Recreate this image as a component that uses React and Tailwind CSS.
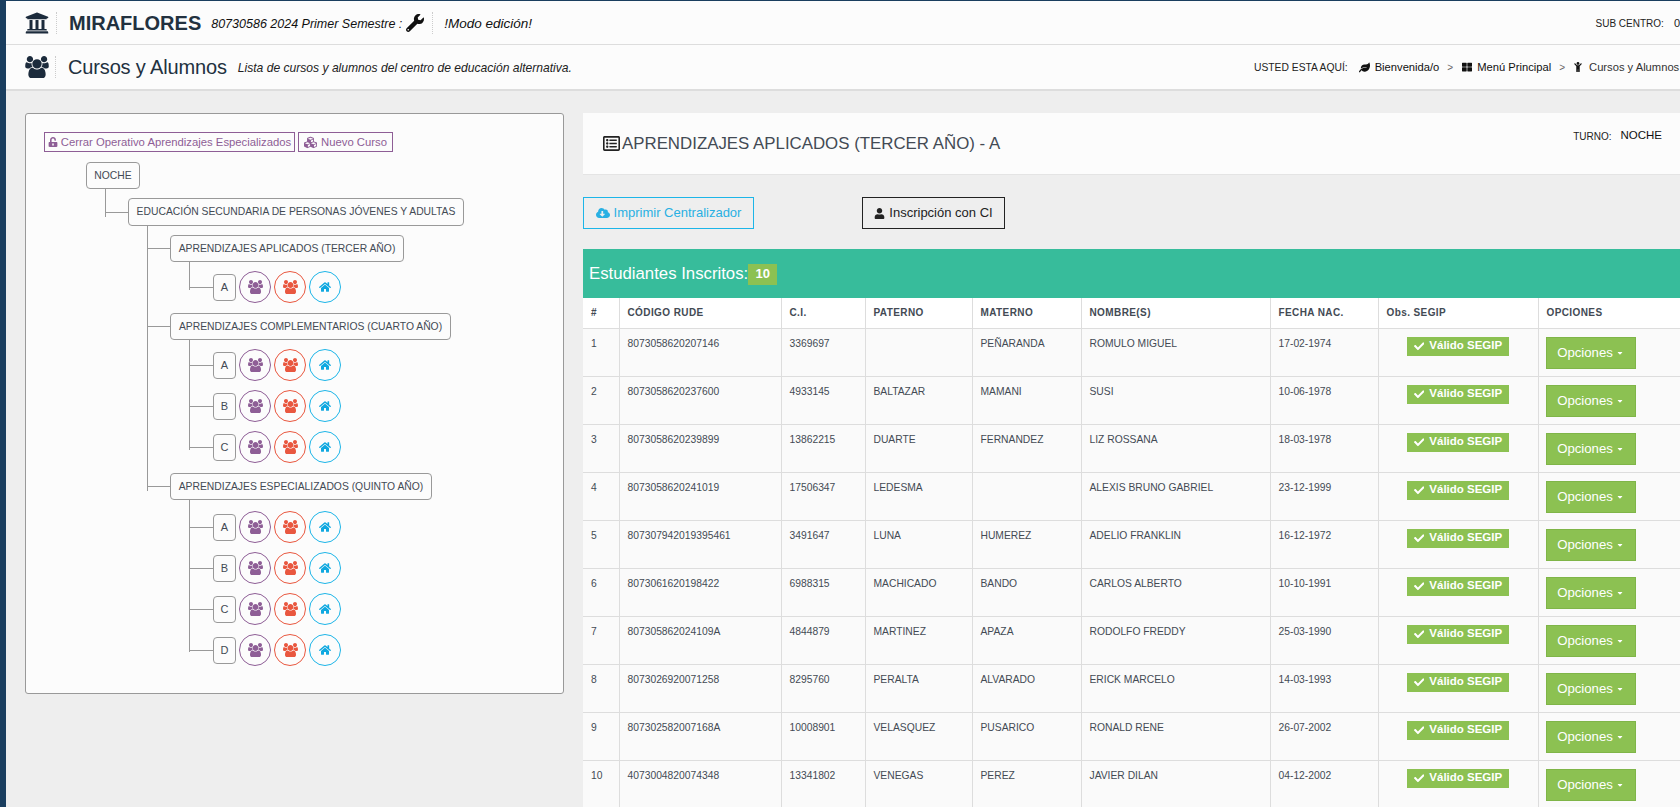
import { FaUniversity, FaWrench, FaUnlockAlt, FaCubes, FaHome, FaCloudDownloadAlt, FaUser, FaCheck, FaLeaf, FaThLarge, FaChild, FaRegListAlt, FaCaretDown } from 'react-icons/fa'

const students = [
  ['1', '8073058620207146', '3369697', '', 'PEÑARANDA', 'ROMULO MIGUEL', '17-02-1974'],
  ['2', '8073058620237600', '4933145', 'BALTAZAR', 'MAMANI', 'SUSI', '10-06-1978'],
  ['3', '8073058620239899', '13862215', 'DUARTE', 'FERNANDEZ', 'LIZ ROSSANA', '18-03-1978'],
  ['4', '8073058620241019', '17506347', 'LEDESMA', '', 'ALEXIS BRUNO GABRIEL', '23-12-1999'],
  ['5', '807307942019395461', '3491647', 'LUNA', 'HUMEREZ', 'ADELIO FRANKLIN', '16-12-1972'],
  ['6', '8073061620198422', '6988315', 'MACHICADO', 'BANDO', 'CARLOS ALBERTO', '10-10-1991'],
  ['7', '807305862024109A', '4844879', 'MARTINEZ', 'APAZA', 'RODOLFO FREDDY', '25-03-1990'],
  ['8', '8073026920071258', '8295760', 'PERALTA', 'ALVARADO', 'ERICK MARCELO', '14-03-1993'],
  ['9', '807302582007168A', '10008901', 'VELASQUEZ', 'PUSARICO', 'RONALD RENE', '26-07-2002'],
  ['10', '4073004820074348', '13341802', 'VENEGAS', 'PEREZ', 'JAVIER DILAN', '04-12-2002'],
]

const headers = ['#', 'CÓDIGO RUDE', 'C.I.', 'PATERNO', 'MATERNO', 'NOMBRE(S)', 'FECHA NAC.', 'Obs. SEGIP', 'OPCIONES']

// three person group icon, taller than the one in the icon package
function UsersIcon({ className = '' }) {
  return (
    <svg viewBox="0 0 1920 1792" fill="currentColor" className={className}>
      <path d="M593 896q-162 5-265 128h-134q-82 0-138-40.500t-56-118.500q0-353 124-353 6 0 43.500 21t97.500 42.500 119 21.500q67 0 133-23-5 37-5 66 0 139 81 256zm1071 637q0 120-73 189.500t-194 69.500h-874q-121 0-194-69.500t-73-189.500q0-53 3.500-103.500t14-109 26.500-108.500 43-97.500 62-81 85.500-53.500 111.500-20q10 0 43 21.500t73 48 107 48 135 21.500 135-21.500 107-48 73-48 43-21.500q61 0 111.500 20t85.500 53.500 62 81 43 97.500 26.500 108.500 14 109 3.500 103.500zm-1024-1277q0 106-75 181t-181 75-181-75-75-181 75-181 181-75 181 75 75 181zm704 384q0 159-112.500 271.500t-271.500 112.500-271.500-112.500-112.500-271.500 112.500-271.500 271.500-112.500 271.500 112.500 112.500 271.500zm576 225q0 78-56 118.500t-138 40.500h-134q-103-123-265-128 81-117 81-256 0-29-5-66 66 23 133 23 59 0 119-21.500t97.500-42.500 43.500-21q124 0 124 353zm-128-609q0 106-75 181t-181 75-181-75-75-181 75-181 181-75 181 75 75 181z" />
    </svg>
  )
}

function TreeBox({ children, className = '' }) {
  return (
    <div className={'flex items-center justify-center border border-[#999] rounded-[4px] bg-[#fcfcfc] text-[10.35px] text-[#434a54] ' + className}>
      {children}
    </div>
  )
}

function Parallel({ label, className = '' }) {
  return (
    <div className={'flex items-center h-[32px] ' + className}>
      <div className="w-[24px] h-px bg-[#999]" />
      <TreeBox className="w-[23px] h-[27px] text-[11px]">{label}</TreeBox>
      <div className="flex gap-[3px] ml-[3px]">
        <div className="w-[32px] h-[32px] rounded-full border border-[#8e5e96] flex items-center justify-center text-[#8e5e96]"><UsersIcon className="w-[15px] h-[14px]" /></div>
        <div className="w-[32px] h-[32px] rounded-full border border-[#e9573f] flex items-center justify-center text-[#e9573f]"><UsersIcon className="w-[15px] h-[14px]" /></div>
        <div className="w-[32px] h-[32px] rounded-full border border-[#1cb5e8] flex items-center justify-center text-[#0fa8e0] text-[12px]"><FaHome /></div>
      </div>
    </div>
  )
}

function Grade({ title, width, parallels, lineHeight, pt = 'pt-[9px]', className = '' }) {
  return (
    <div className={className}>
      <div className="flex items-center">
        <div className="w-[23px] h-px bg-[#999]" />
        <TreeBox className={'h-[27px] ' + width}>{title}</TreeBox>
      </div>
      <div className={'relative ml-[42px] ' + pt}>
        <div className="absolute left-0 -top-px w-px bg-[#999]" style={{ height: lineHeight }} />
        {parallels.map((p, i) => (
          <Parallel key={p} label={p} className={i > 0 ? 'mt-[9px]' : ''} />
        ))}
      </div>
    </div>
  )
}

export default function App() {
  return (
    <div className="w-[1680px] h-[807px] overflow-hidden flex bg-[#eeeeee] font-['Liberation_Sans',Arial,sans-serif] text-[#111]">
      <div className="w-[6px] bg-[#1a3e5f] shrink-0" />
      <div className="flex-1 min-w-0 flex flex-col">
        {/* Top bar */}
        <div className="h-[45px] pt-px bg-[#fcfcfc] border-t border-t-[#1a3e5f] border-b border-b-[#dddddd] flex items-center justify-between whitespace-nowrap">
          <div className="flex items-center">
            <FaUniversity className="ml-[19px] text-[#1c2b3c] text-[24px]" />
            <div className="ml-[7px] h-[22px] border-l border-dotted border-[#ccc]" />
            <span className="ml-[12px] text-[20px] font-bold text-[#22313f]">MIRAFLORES</span>
            <span className="ml-[10px] mt-[3px] text-[12.5px] italic text-[#111]">80730586 2024 Primer Semestre :</span>
            <FaWrench className="ml-[4px] text-[18px] text-[#111]" />
            <div className="ml-[8px] h-[22px] border-l border-dotted border-[#ccc]" />
            <span className="ml-[11px] mt-[3px] text-[13.5px] italic">!Modo edición!</span>
          </div>
          <div className="flex items-center text-[10px] text-[#222]">
            <span>SUB CENTRO:</span>
            <span className="ml-[10px] text-[11px]">0</span>
          </div>
        </div>
        {/* Page title */}
        <div className="h-[46px] bg-[#fcfcfc] border-b-2 border-b-[#dddddd] flex items-center justify-between whitespace-nowrap">
          <div className="flex items-center">
            <UsersIcon className="ml-[19px] w-[24px] h-[22px] text-[#1c2b3c]" />
            <div className="ml-[6px] h-[22px] border-l border-dotted border-[#ccc]" />
            <span className="ml-[12px] text-[20px] tracking-[-0.15px] text-[#22313f]">Cursos y Alumnos</span>
            <span className="ml-[11px] mt-[2px] text-[12.1px] italic text-[#222]">Lista de cursos y alumnos del centro de educación alternativa.</span>
          </div>
          <div className="flex items-center pt-px text-[11.2px] text-[#111] w-[426px] shrink-0 overflow-hidden">
            <span className="text-[10.3px] text-[#222]">USTED ESTA AQUÍ:</span>
            <FaLeaf className="ml-[11px] text-[11px]" />
            <span className="ml-[5px]">Bienvenida/o</span>
            <span className="ml-[8px] text-[10px] text-[#666]">&gt;</span>
            <FaThLarge className="ml-[9px] text-[10px]" />
            <span className="ml-[5px]">Menú Principal</span>
            <span className="ml-[8px] text-[10px] text-[#666]">&gt;</span>
            <FaChild className="ml-[8px] text-[10px]" />
            <span className="ml-[6px] text-[#333]">Cursos y Alumnos</span>
          </div>
        </div>

        <div className="flex-1 min-h-0 flex items-start pt-[22px] pl-[19px]">
          {/* Left tree panel */}
          <div className="w-[539px] h-[581px] shrink-0 border border-[#999] rounded-[3px] bg-[#fcfcfc] pt-[18px] pl-[18px]">
            <div className="flex gap-[3px] whitespace-nowrap text-[11.3px] text-[#8e5e96]">
              <button className="h-[20px] w-[251px] border border-[#8e5e96] flex items-center justify-center gap-[3px]"><FaUnlockAlt className="text-[10px]" />Cerrar Operativo Aprendizajes Especializados</button>
              <button className="h-[20px] w-[95px] border border-[#8e5e96] flex items-center justify-center gap-[4px]"><FaCubes className="text-[13px]" />Nuevo Curso</button>
            </div>
            <div className="ml-[42px] mt-[10px] whitespace-nowrap">
              <TreeBox className="w-[54px] h-[27px]">NOCHE</TreeBox>
              <div className="relative ml-[19px] pt-[9px]">
                <div className="absolute left-0 top-0 w-px h-[28px] bg-[#999]" />
                <div className="flex items-center">
                  <div className="w-[23px] h-px bg-[#999]" />
                  <TreeBox className="w-[336px] h-[28px]">EDUCACIÓN SECUNDARIA DE PERSONAS JÓVENES Y ADULTAS</TreeBox>
                </div>
                <div className="relative ml-[42px] pt-[9px]">
                  <div className="absolute left-0 top-0 w-px h-[265px] bg-[#999]" />
                  <Grade title="APRENDIZAJES APLICADOS (TERCER AÑO)" width="w-[234px]" parallels={['A']} lineHeight="29px" />
                  <Grade title="APRENDIZAJES COMPLEMENTARIOS (CUARTO AÑO)" width="w-[281px]" parallels={['A', 'B', 'C']} lineHeight="111px" className="mt-[10px]" />
                  <Grade title="APRENDIZAJES ESPECIALIZADOS (QUINTO AÑO)" width="w-[262px]" parallels={['A', 'B', 'C', 'D']} lineHeight="153px" pt="pt-[11px]" className="mt-[10px]" />
                </div>
              </div>
            </div>
          </div>

          {/* Right course panel */}
          <div className="ml-[19px] flex-1 min-w-0">
            <div className="h-[62px] bg-[#fcfcfc] border-b border-b-[#e4e4e4] flex justify-between pl-[20px] whitespace-nowrap">
              <div className="flex items-center h-[61px] text-[#434a54]">
                <FaRegListAlt className="text-[17px] text-[#222]" />
                <span className="ml-[2px] text-[16.85px]">APRENDIZAJES APLICADOS (TERCER AÑO) - A</span>
              </div>
              <div className="flex items-center h-[46px] mr-[18px]">
                <span className="text-[10px] text-[#222]">TURNO:</span>
                <span className="ml-[9px] text-[11.5px] text-[#111]">NOCHE</span>
              </div>
            </div>
            <div className="flex items-center mt-[22px]">
              <button className="w-[171px] h-[32px] border border-[#1cb5e8] text-[#29b0e3] text-[13px] flex items-center justify-center gap-[4px]"><FaCloudDownloadAlt className="text-[14px]" />Imprimir Centralizador</button>
              <button className="ml-[108px] w-[143px] h-[32px] border border-[#222] text-[#222] text-[13px] flex items-center justify-center gap-[4px]"><FaUser className="text-[11px]" />Inscripción con CI</button>
            </div>
            <div className="mt-[20px] h-[49px] bg-[#37bc9b] flex items-center pl-[6px] text-white text-[16.75px]">
              <span>Estudiantes Inscritos:</span>
              <span className="w-[29px] h-[21px] mt-px bg-[#8cc152] flex items-center justify-center text-[13px] font-bold">10</span>
            </div>
            <table className="w-[1097px] table-fixed border-collapse bg-[#fafafa] text-[10.3px] text-[#434a54]">
              <colgroup>
                <col className="w-[36px]" />
                <col className="w-[162px]" />
                <col className="w-[84px]" />
                <col className="w-[107px]" />
                <col className="w-[109px]" />
                <col className="w-[189px]" />
                <col className="w-[108px]" />
                <col className="w-[160px]" />
                <col className="w-[142px]" />
              </colgroup>
              <thead>
                <tr className="h-[30px] bg-white">
                  {headers.map((h) => (
                    <th key={h} className="border border-[#dddddd] border-t-0 first:border-l-0 px-[8px] text-left font-bold text-[10px] tracking-[0.4px] whitespace-nowrap">{h}</th>
                  ))}
                </tr>
              </thead>
              <tbody>
                {students.map((s) => (
                  <tr key={s[0]} className="h-[48px]">
                    {s.map((c, i) => (
                      <td key={i} className="border border-[#dddddd] first:border-l-0 px-[8px] pt-[7px] align-top whitespace-nowrap">{c}</td>
                    ))}
                    <td className="border border-[#dddddd] pt-[8px] align-top">
                      <div className="mx-auto w-[102px] h-[19px] bg-[#8cc152] text-white font-bold text-[11.5px] flex items-center justify-center gap-[5px]"><FaCheck className="text-[10.5px]" />Válido SEGIP</div>
                    </td>
                    <td className="border border-[#dddddd] pt-[8px] pl-[7px] align-top">
                      <div className="w-[90px] h-[32px] bg-[#8cc152] border border-[#7fb548] text-white text-[13.2px] flex items-center justify-center gap-[3px]">Opciones<FaCaretDown className="text-[8px]" /></div>
                    </td>
                  </tr>
                ))}
              </tbody>
            </table>
          </div>
        </div>
      </div>
    </div>
  )
}
